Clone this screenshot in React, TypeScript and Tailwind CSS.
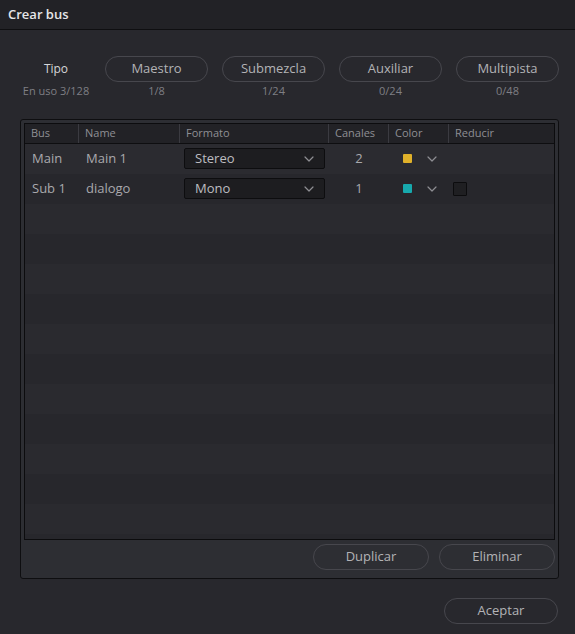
import React from "react";

const font = { fontFamily: '"Open Sans", "Noto Sans", sans-serif' };

function Chevron({ className = "" }: { className?: string }) {
  return (
    <svg width="10" height="6" viewBox="0 0 10 6" className={className} fill="none">
      <path d="M1 1l4 4 4-4" stroke="#8e8e93" strokeWidth="1.2" strokeLinecap="round" strokeLinejoin="round" />
    </svg>
  );
}

function PillButton({ label, w = "w-[103px]" }: { label: string; w?: string }) {
  return (
    <div className={`${w} h-[26px] rounded-full border border-[#47474d] flex items-center justify-center text-[13px] text-[#b3b3b6]`}>
      {label}
    </div>
  );
}

type Row = { bus: string; name: string; fmt: string; ch: string; color: string; reducir: boolean };
const rows: Row[] = [
  { bus: "Main", name: "Main 1", fmt: "Stereo", ch: "2", color: "#e0b12a", reducir: false },
  { bus: "Sub 1", name: "dialogo", fmt: "Mono", ch: "1", color: "#17a9ad", reducir: true },
];

const cols = "grid grid-cols-[54px_101px_149px_60px_60px_1fr]";

export default function App() {
  const empty = Array.from({ length: 12 });
  return (
    <div className="w-[575px] h-[634px] bg-[#28282d] flex flex-col overflow-hidden" style={font}>
      <div className="h-[30px] bg-[#222226] border-b border-[#0f0f11] flex items-center px-[8px]">
        <span className="text-[13px] font-semibold text-[#e6e6e8]">Crear bus</span>
      </div>

      <div className="flex items-start pt-[26px]">
        <div className="w-[105px] pl-[7px] flex flex-col items-center">
          <div className="h-[26px] flex items-center text-[12px] text-[#d6d6d8]">Tipo</div>
          <div className="text-[11px] text-[#7f7f84] mt-[1px]">En uso 3/128</div>
        </div>
        <div className="flex gap-[14px]">
          {[
            ["Maestro", "1/8"],
            ["Submezcla", "1/24"],
            ["Auxiliar", "0/24"],
            ["Multipista", "0/48"],
          ].map(([l, c]) => (
            <div key={l} className="flex flex-col items-center">
              <PillButton label={l} />
              <div className="text-[11px] text-[#7f7f84] mt-[1px]">{c}</div>
            </div>
          ))}
        </div>
      </div>

      <div className="mx-[20px] mt-[19px] w-[539px] h-[460px] border border-[#0e0e10] rounded-[3px] bg-[#2d2e33] flex flex-col p-[3px]">
        <div className="h-[417px] border border-[#0c0c0e] bg-[#28282d] flex flex-col overflow-hidden">
          <div className={`${cols} h-[20px] bg-[#222226] border-b border-[#0e0e10] text-[11px] text-[#8f8f94] shrink-0`}>
            {["Bus", "Name", "Formato", "Canales", "Color", "Reducir"].map((h, i) => (
              <div
                key={h}
                className={`flex items-center pl-[6px] ${i < 5 ? "border-r border-[#3b3b41]" : ""}`}
              >
                {h}
              </div>
            ))}
          </div>
          {rows.map((r, i) => (
            <div
              key={r.bus}
              className={`${cols} h-[30px] shrink-0 text-[13px] text-[#a9a9ad] ${i % 2 === 0 ? "bg-[#2b2b30]" : "bg-[#27272c]"}`}
            >
              <div className="flex items-center pl-[7px]">{r.bus}</div>
              <div className="flex items-center pl-[7px]">{r.name}</div>
              <div className="flex items-center pl-[4px]">
                <div className="w-[141px] h-[21px] bg-[#1d1d20] border border-[#0d0d0f] rounded-[2px] flex items-center justify-between pl-[10px] pr-[10px] text-[#bdbdc0]">
                  <span>{r.fmt}</span>
                  <Chevron />
                </div>
              </div>
              <div className="flex items-center justify-center">{r.ch}</div>
              <div className="flex items-center pl-[14px] gap-[15px]">
                <div className="w-[9px] h-[9px] rounded-[1px]" style={{ backgroundColor: r.color }} />
                <Chevron />
              </div>
              <div className="flex items-center pl-[4px]">
                {r.reducir && (
                  <div className="w-[14px] h-[14px] bg-[#1f1f22] border border-[#0c0c0e] rounded-[1px]" />
                )}
              </div>
            </div>
          ))}
          {empty.map((_, i) => (
            <div
              key={i}
              className={`h-[30px] shrink-0 ${i % 2 === 0 ? "bg-[#2a2a2f]" : "bg-[#27272c]"}`}
            />
          ))}
        </div>
        <div className="flex justify-end gap-[10px] mt-[4px]">
          <PillButton label="Duplicar" w="w-[116px]" />
          <PillButton label="Eliminar" w="w-[116px]" />
        </div>
      </div>

      <div className="flex justify-end pr-[17px] mt-[19px]">
        <PillButton label="Aceptar" w="w-[114px]" />
      </div>
    </div>
  );
}
